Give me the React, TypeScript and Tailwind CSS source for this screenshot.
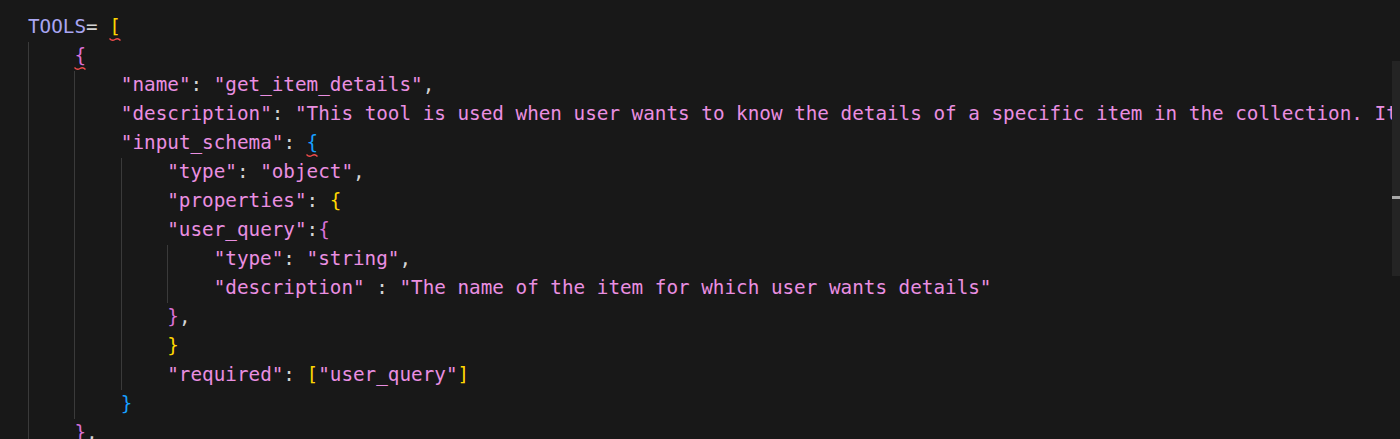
const STR = "text-[#ea8fe1]";
const PUN = "text-[#d4d4d4]";
const VAR = "text-[#a9a6f2]";
const Y = "text-[#ffd700]";
const PK = "text-[#da70d6]";
const BL = "text-[#179fff]";

type Tok = { t: string; c: string; squiggle?: boolean };
type Line = { indent: number; toks: Tok[] };

const lines: Line[] = [
  { indent: 0, toks: [{ t: "TOOLS", c: VAR }, { t: "= ", c: PUN }, { t: "[", c: Y, squiggle: true }] },
  { indent: 1, toks: [{ t: "{", c: PK, squiggle: true }] },
  {
    indent: 2,
    toks: [
      { t: '"name"', c: STR },
      { t: ": ", c: PUN },
      { t: '"get_item_details"', c: STR },
      { t: ",", c: PUN },
    ],
  },
  {
    indent: 2,
    toks: [
      { t: '"description"', c: STR },
      { t: ": ", c: PUN },
      {
        t: '"This tool is used when user wants to know the details of a specific item in the collection. It',
        c: STR,
      },
    ],
  },
  {
    indent: 2,
    toks: [
      { t: '"input_schema"', c: STR },
      { t: ": ", c: PUN },
      { t: "{", c: BL, squiggle: true },
    ],
  },
  {
    indent: 3,
    toks: [
      { t: '"type"', c: STR },
      { t: ": ", c: PUN },
      { t: '"object"', c: STR },
      { t: ",", c: PUN },
    ],
  },
  {
    indent: 3,
    toks: [
      { t: '"properties"', c: STR },
      { t: ": ", c: PUN },
      { t: "{", c: Y },
    ],
  },
  {
    indent: 3,
    toks: [
      { t: '"user_query"', c: STR },
      { t: ":", c: PUN },
      { t: "{", c: PK },
    ],
  },
  {
    indent: 4,
    toks: [
      { t: '"type"', c: STR },
      { t: ": ", c: PUN },
      { t: '"string"', c: STR },
      { t: ",", c: PUN },
    ],
  },
  {
    indent: 4,
    toks: [
      { t: '"description"', c: STR },
      { t: " : ", c: PUN },
      { t: '"The name of the item for which user wants details"', c: STR },
    ],
  },
  {
    indent: 3,
    toks: [
      { t: "}", c: PK },
      { t: ",", c: PUN },
    ],
  },
  { indent: 3, toks: [{ t: "}", c: Y }] },
  {
    indent: 3,
    toks: [
      { t: '"required"', c: STR },
      { t: ": ", c: PUN },
      { t: "[", c: Y },
      { t: '"user_query"', c: STR },
      { t: "]", c: Y },
    ],
  },
  { indent: 2, toks: [{ t: "}", c: BL }] },
  {
    indent: 1,
    toks: [
      { t: "}", c: PK },
      { t: ",", c: PUN },
    ],
  },
];

function Squiggle() {
  return (
    <svg
      className="pointer-events-none absolute left-1/2 top-[calc(50%+9px)] -translate-x-1/2"
      width="12"
      height="5"
      viewBox="0 0 12 5"
    >
      <path d="M0.5 1.5 Q3 4.5 6 2.5 Q9 0.5 11.5 3.5" fill="none" stroke="#f14c4c" strokeWidth="1.3" />
    </svg>
  );
}

export default function App() {
  return (
    <div className="relative h-[439px] w-[1400px] overflow-hidden bg-[#181818]">
      <div
        className="flex flex-col pl-[28px] pt-[13px] text-[19.3px]"
        style={{ fontFamily: '"DejaVu Sans Mono", "Liberation Mono", monospace' }}
      >
        {lines.map((line, i) => (
          <div key={i} className="flex h-[29px] items-center whitespace-pre">
            {Array.from({ length: line.indent }).map((_, j) => (
              <span key={j} className="h-full w-[4ch] shrink-0 border-l border-[#3a3a3a]" />
            ))}
            {line.toks.map((tok, k) => (
              <span key={k} className={`${tok.c} ${tok.squiggle ? "relative" : ""}`}>
                {tok.t}
                {tok.squiggle && <Squiggle />}
              </span>
            ))}
          </div>
        ))}
      </div>

      {/* scrollbar / overview ruler */}
      <div className="absolute right-0 top-[61px] h-[215px] w-[8px] bg-[#242424]">
        <div className="mt-[135px] h-[3px] w-full bg-[#a8a8a8]" />
      </div>
    </div>
  );
}
